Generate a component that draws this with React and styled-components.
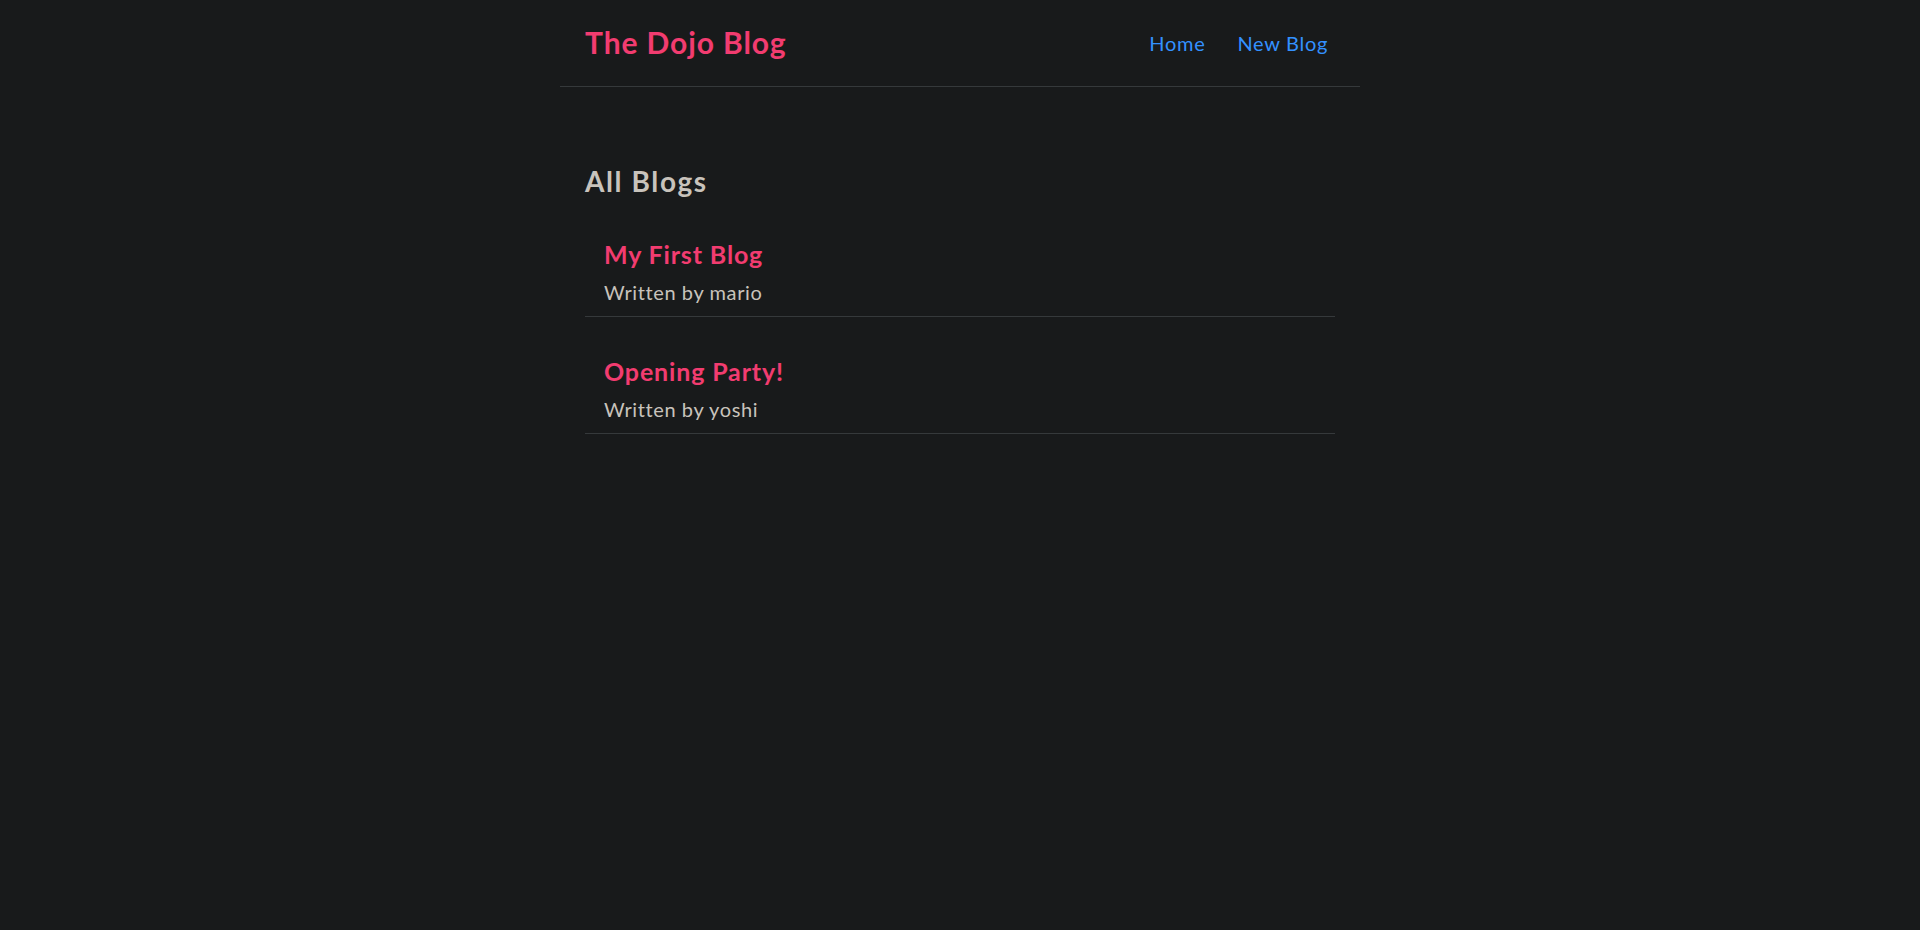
import React from 'react';
import styled, { createGlobalStyle } from 'styled-components';

const GlobalStyle = createGlobalStyle`
  * {
    box-sizing: border-box;
  }

  body {
    margin: 0;
    background: #181a1b;
    color: #c8c3bc;
    font-family: Lato, "Open Sans", sans-serif;
  }
`;

const blogs = [
  { id: 1, title: 'My First Blog', author: 'mario' },
  { id: 2, title: 'Opening Party!', author: 'yoshi' },
];

const App = () => {
  return (
    <>
      <GlobalStyle />
      <Navbar>
        <Brand>The Dojo Blog</Brand>
        <Links>
          <NavLink href="#">Home</NavLink>
          <NavLink href="#">New Blog</NavLink>
        </Links>
      </Navbar>
      <Content>
        <Heading>All Blogs</Heading>
        <BlogList>
          {blogs.map((blog) => (
            <Preview key={blog.id}>
              <PreviewTitle>{blog.title}</PreviewTitle>
              <Author>Written by {blog.author}</Author>
            </Preview>
          ))}
        </BlogList>
      </Content>
    </>
  );
};

const Navbar = styled.nav`
  max-width: 800px;
  height: 87px;
  margin: 0 auto;
  padding: 0 32px 0 25px;
  display: flex;
  align-items: center;
  border-bottom: 1px solid #35393b;
`;

const Brand = styled.h1`
  margin: 0 0 2px;
  font-size: 30px;
  font-weight: 700;
  letter-spacing: 0.9px;
  color: #f23c70;
`;

const Links = styled.div`
  margin-left: auto;
  display: flex;
  align-items: center;
  gap: 32px;
`;

const NavLink = styled.a`
  font-size: 20px;
  letter-spacing: 0.7px;
  color: #3391ff;
  text-decoration: none;
`;

const Content = styled.main`
  max-width: 750px;
  margin: 0 auto;
  padding-top: 77px;
`;

const Heading = styled.h2`
  margin: 0;
  font-size: 28px;
  font-weight: 700;
  letter-spacing: 1.6px;
  color: #c8c3bc;
`;

const BlogList = styled.div`
  margin-top: 31px;
  display: flex;
  flex-direction: column;
  gap: 29px;
`;

const Preview = styled.div`
  padding: 10px 19px 12px;
  border-bottom: 1px solid #35393b;
`;

const PreviewTitle = styled.h2`
  margin: 0 0 11px;
  font-size: 25px;
  font-weight: 700;
  letter-spacing: 0.85px;
  color: #f23c70;
`;

const Author = styled.p`
  margin: 0;
  font-size: 20px;
  letter-spacing: 0.6px;
  color: #c8c3bc;
`;

export default App;
